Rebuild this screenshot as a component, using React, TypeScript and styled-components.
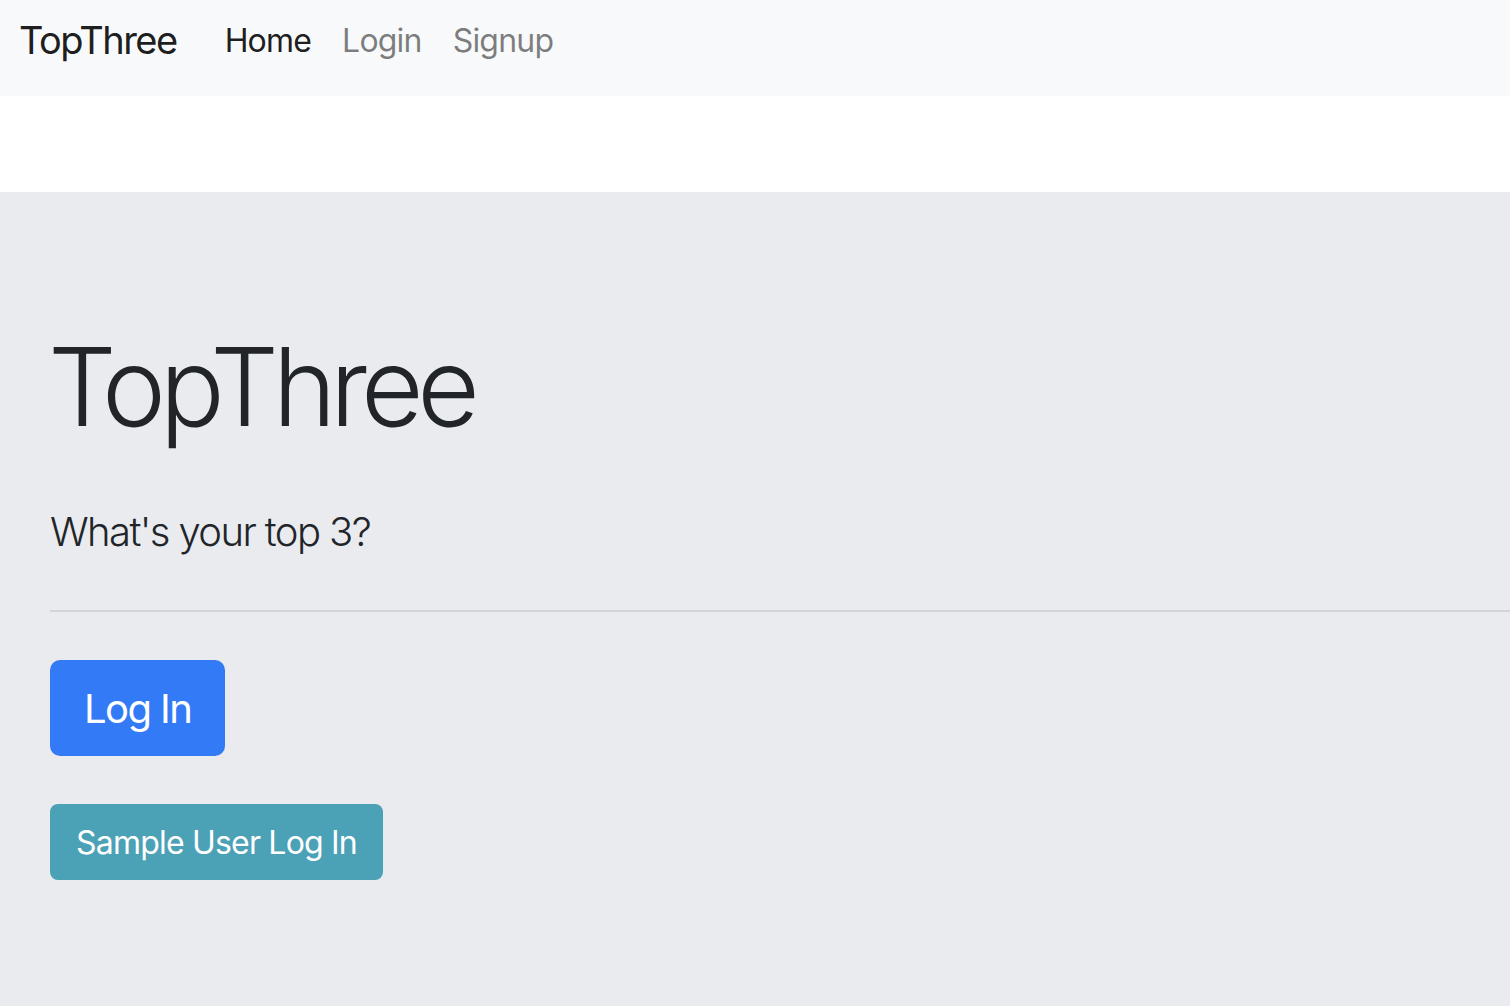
import React from "react";
import styled, { createGlobalStyle } from "styled-components";

const Global = createGlobalStyle`
  html, body { margin: 0; padding: 0; background: #ffffff; }
  body { font-family: Inter, "Noto Sans", "Liberation Sans", sans-serif; color: #212529; }
  * { box-sizing: border-box; }
`;

const Page = styled.div`
  display: flex;
  flex-direction: column;
  min-height: 1006px;
  overflow: hidden;
`;

const Navbar = styled.nav`
  height: 96px;
  background: #f8f9fa;
  display: flex;
  align-items: center;
  padding: 0 19px 16px;
  margin-bottom: 96px;
`;

const Brand = styled.a`
  font-size: 38px;
  color: rgba(0, 0, 0, 0.9);
  text-decoration: none;
  margin-right: 48px;
  letter-spacing: -1.5px;
`;

const NavList = styled.div`
  display: flex;
  gap: 31px;
`;

const NavLink = styled.a<{ $active?: boolean }>`
  font-size: 32px;
  letter-spacing: -0.8px;
  color: ${(p) => (p.$active ? "rgba(0,0,0,0.9)" : "rgba(0,0,0,0.5)")};
  text-decoration: none;
`;

const Jumbotron = styled.section`
  flex: 1;
  background: #e9ebef;
  padding: 128px 0 0 50px;
  display: flex;
  flex-direction: column;
  align-items: flex-start;
`;

const Display = styled.h1`
  margin: 0 0 0 -2px;
  font-size: 108px;
  font-weight: 300;
  line-height: 134px;
  letter-spacing: -6.2px;
  color: #212529;
`;

const Lead = styled.p`
  margin: 48px 0 0;
  font-size: 40px;
  font-weight: 300;
  line-height: 1.5;
  letter-spacing: -1.6px;
  color: #212529;
`;

const Rule = styled.hr`
  align-self: stretch;
  margin: 48px 0 48px;
  border: 0;
  border-top: 2px solid #d2d4d8;
`;

const Button = styled.button<{ $variant: "primary" | "info"; $size: "lg" | "md" }>`
  border: none;
  color: #ffffff;
  font-family: inherit;
  cursor: pointer;
  background: ${(p) => (p.$variant === "primary" ? "#337af7" : "#4ba1b6")};
  font-size: ${(p) => (p.$size === "lg" ? "40px" : "32px")};
  letter-spacing: ${(p) => (p.$size === "lg" ? "-1.6px" : "-0.8px")};
  height: ${(p) => (p.$size === "lg" ? "96px" : "76px")};
  padding: ${(p) => (p.$size === "lg" ? "0 34px" : "0 26px")};
  border-radius: ${(p) => (p.$size === "lg" ? "10px" : "8px")};
  margin-bottom: 48px;
`;

export default function App() {
  return (
    <Page>
      <Global />
      <Navbar>
        <Brand href="#">TopThree</Brand>
        <NavList>
          <NavLink href="#" $active>Home</NavLink>
          <NavLink href="#">Login</NavLink>
          <NavLink href="#">Signup</NavLink>
        </NavList>
      </Navbar>
      <Jumbotron>
        <Display>TopThree</Display>
        <Lead>What's your top 3?</Lead>
        <Rule />
        <Button $variant="primary" $size="lg">Log In</Button>
        <Button $variant="info" $size="md">Sample User Log In</Button>
      </Jumbotron>
    </Page>
  );
}
